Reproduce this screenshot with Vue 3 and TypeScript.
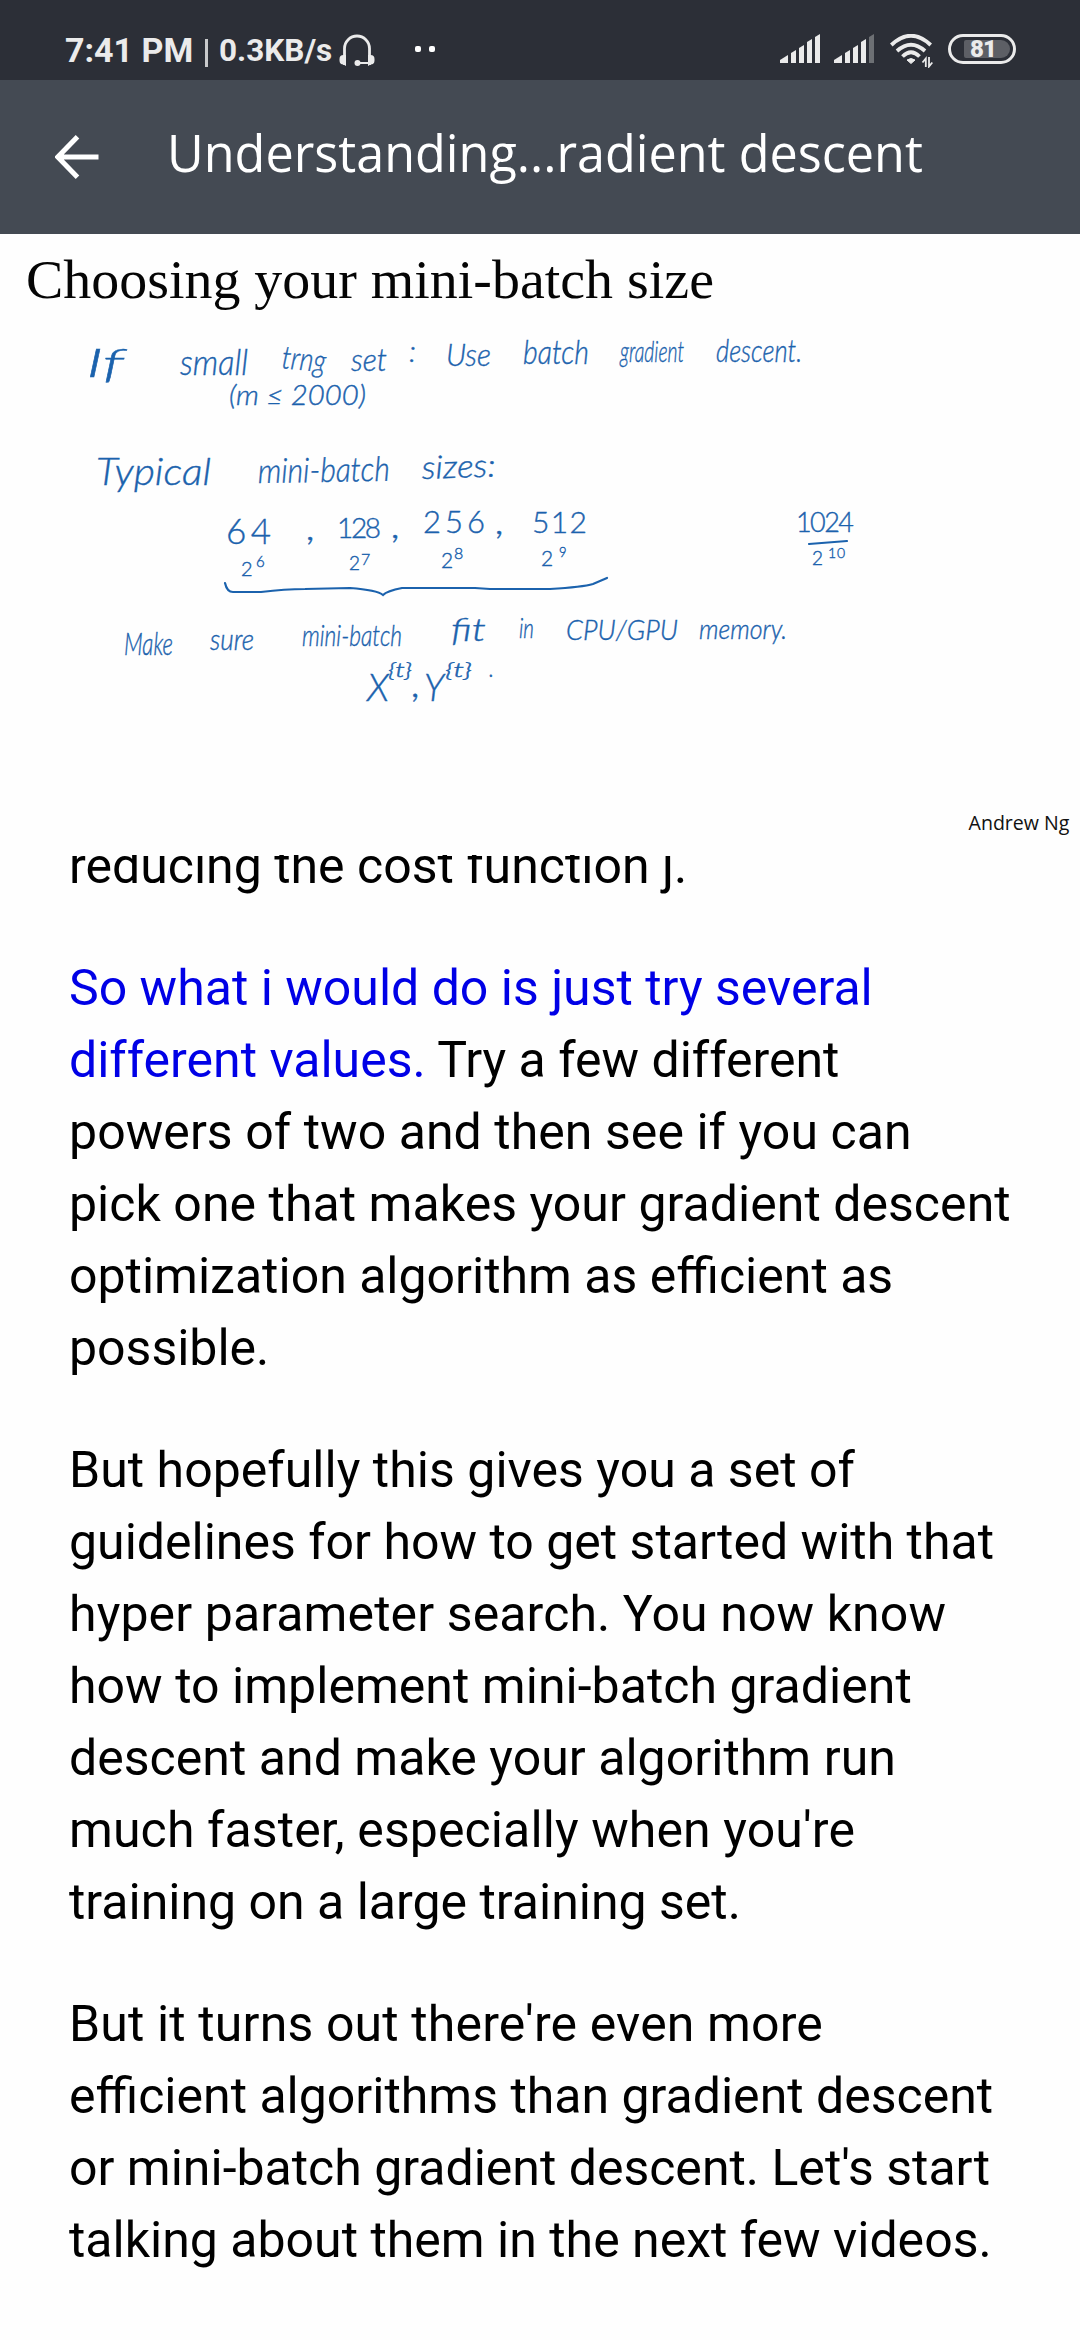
<script setup lang="ts">
interface Ink {
  t: string
  x: number
  y: number
  size: number
  w: number
  r?: number
  up?: boolean
}

// Words on the slide, placed by baseline start, size, written width and slant.
const ink: Ink[] = [
  { t: 'If', x: 86, y: 377, size: 40, w: 38 },
  { t: 'small', x: 180, y: 375, size: 36, w: 68 },
  { t: 'trng', x: 281, y: 368, size: 32, w: 44, r: 6 },
  { t: 'set', x: 351, y: 371, size: 31, w: 36 },
  { t: ':', x: 409, y: 362, size: 30, w: 7 },
  { t: 'Use', x: 446, y: 366, size: 32, w: 45 },
  { t: 'batch', x: 523, y: 364, size: 34, w: 66 },
  { t: 'gradient', x: 620, y: 362, size: 30, w: 64 },
  { t: 'descent.', x: 716, y: 362, size: 32, w: 86 },
  { t: '(m ≤ 2000)', x: 229, y: 405, size: 28, w: 137 },
  { t: 'Typical', x: 96, y: 485, size: 37, w: 115 },
  { t: 'mini-batch', x: 258, y: 483, size: 34, w: 132, r: -1 },
  { t: 'sizes:', x: 422, y: 479, size: 32, w: 74, r: -2 },
  { t: '64', x: 226, y: 544, size: 35, w: 45, up: true },
  { t: ',', x: 307, y: 540, size: 36, w: 9 },
  { t: '128', x: 337, y: 538, size: 28, w: 44, up: true },
  { t: ',', x: 392, y: 538, size: 36, w: 9 },
  { t: '256', x: 423, y: 533, size: 31, w: 62, up: true },
  { t: ',', x: 496, y: 534, size: 36, w: 9 },
  { t: '512', x: 532, y: 533, size: 30, w: 55, up: true },
  { t: '2', x: 241, y: 576, size: 20, w: 12, up: true },
  { t: '6', x: 256, y: 567, size: 15, w: 8, up: true },
  { t: '2', x: 349, y: 570, size: 19, w: 11, up: true },
  { t: '7', x: 361, y: 565, size: 16, w: 11, up: true },
  { t: '2', x: 441, y: 568, size: 21, w: 11, up: true },
  { t: '8', x: 454, y: 559, size: 16, w: 9, up: true },
  { t: '2', x: 541, y: 566, size: 21, w: 13, up: true },
  { t: '9', x: 559, y: 557, size: 13, w: 9, up: true },
  { t: '1024', x: 796, y: 532, size: 27, w: 58, up: true },
  { t: '2', x: 812, y: 565, size: 19, w: 14, up: true },
  { t: '10', x: 828, y: 558, size: 14, w: 17, up: true },
  { t: 'Make', x: 124, y: 655, size: 31, w: 49 },
  { t: 'sure', x: 210, y: 650, size: 29, w: 44 },
  { t: 'mini-batch', x: 302, y: 646, size: 29, w: 100 },
  { t: 'fit', x: 451, y: 641, size: 32, w: 35 },
  { t: 'in', x: 519, y: 638, size: 27, w: 15 },
  { t: 'CPU/GPU', x: 566, y: 640, size: 28, w: 112 },
  { t: 'memory.', x: 699, y: 639, size: 28, w: 88 },
  { t: 'X', x: 367, y: 701, size: 38, w: 22 },
  { t: '{t}', x: 388, y: 677, size: 19, w: 24 },
  { t: ',', x: 412, y: 697, size: 38, w: 9 },
  { t: 'Y', x: 424, y: 701, size: 38, w: 20 },
  { t: '{t}', x: 445, y: 677, size: 19, w: 27 },
  { t: '.', x: 489, y: 677, size: 26, w: 5 },
]

const bars = [8, 13, 18, 24, 29]

interface Line {
  t: string
  mark?: string
  gap?: number
}

const paragraphs: Line[][] = [
  [{ t: 'reducing the cost function j.' }],
  [
    { mark: 'So what i would do is just try several', t: '' },
    { mark: 'different values.', t: ' Try a few different' },
    { t: 'powers of two and then see if you can', gap: 0.05 },
    { t: 'pick one that makes your gradient descent', gap: 0.04 },
    { t: 'optimization algorithm as efficient as' },
    { t: 'possible.' },
  ],
  [
    { t: 'But hopefully this gives you a set of', gap: 0.03 },
    { t: 'guidelines for how to get started with that' },
    { t: 'hyper parameter search. You now know', gap: 0.1 },
    { t: 'how to implement mini-batch gradient', gap: 0.03 },
    { t: 'descent and make your algorithm run', gap: 0.03 },
    { t: "much faster, especially when you're", gap: 0.1 },
    { t: 'training on a large training set.' },
  ],
  [
    { t: "But it turns out there're even more", gap: 0.14 },
    { t: 'efficient algorithms than gradient descent' },
    { t: "or mini-batch gradient descent. Let's start" },
    { t: 'talking about them in the next few videos.' },
  ],
]
</script>

<template>
  <div class="screen">
    <div class="status">
      <span class="clock">7:41 PM</span>
      <span class="sep"></span>
      <span class="rate">0.3KB/s</span>
      <svg class="headset" width="36" height="33" viewBox="0 0 36 33">
        <path d="M5.500 31V14.500a12.500 12.500 0 0 1 25 0V31" fill="none" stroke="#ebebeb" stroke-width="2.800" />
        <path d="M7 21H4.500Q.5 21 .5 25v1.500Q.5 30.500 4.500 30.500L7 32zM29 21h2.500q4 0 4 4v1.500q0 4-4 4L29 32z" fill="#ebebeb" />
        <path d="M18 29h13" stroke="#ebebeb" stroke-width="2" />
        <circle cx="18.500" cy="29" r="3" fill="#ebebeb" />
      </svg>
      <span class="dots"><i></i><i></i></span>
      <span class="grow"></span>
      <svg v-for="n in 2" :key="n" class="signal" width="40" height="29" viewBox="0 0 40 29">
        <path
          v-for="(h, i) in bars"
          :key="i"
          :d="i === 0 ? 'M0 29V26L8 21V29z' : `M${i * 8 + 3} 29V${32 - h}L${i * 8 + 8} ${29 - h}V29z`"
          :fill="n === 2 && i === 4 ? '#6d7074' : '#ebebeb'"
        />
      </svg>
      <svg class="wifi" width="44" height="34" viewBox="0 0 44 34">
        <g fill="none" stroke="#ebebeb" stroke-width="3.800">
          <path d="M1.300 11Q21-7.500 40.700 11" />
          <path d="M7 17Q21 4.500 35 17" />
          <path d="M12.500 22.500Q21 14 29.500 22.500" />
        </g>
        <path d="M21 29.500L17 26q4-3 8 0z" fill="#ebebeb" stroke="#ebebeb" stroke-width="1" />
        <path d="M35.800 33V24.500L32.500 28.500M39 23v9.500L42.300 28.500" fill="none" stroke="#ebebeb" stroke-width="1.800" />
      </svg>
      <span class="battery"><b>81</b></span>
    </div>

    <header class="bar">
      <svg class="back" width="44" height="44" viewBox="0 0 44 44">
        <path d="M22.500 1.800L2.800 22L22.500 42.200M3.500 22H43.500" fill="none" stroke="#fff" stroke-width="5" />
      </svg>
      <h1>Understanding...radient descent</h1>
    </header>

    <section class="slide">
      <svg width="1080" height="621" viewBox="0 234 1080 621">
        <text class="heading" x="26" y="298" textLength="688" lengthAdjust="spacingAndGlyphs">Choosing your mini-batch size</text>
        <g class="ink">
          <text
            v-for="(k, i) in ink"
            :key="i"
            :class="{ up: k.up }"
            :x="k.x"
            :y="k.y"
            :font-size="k.size"
            :textLength="k.w"
            :lengthAdjust="k.up ? 'spacing' : 'spacingAndGlyphs'"
            :transform="`rotate(${k.r ?? 0} ${k.x} ${k.y})`"
          >{{ k.t }}</text>
        </g>
        <g class="strokes">
          <path d="M225 583Q227 592 233 592H261Q285 589 305 589L350 588Q377 590 383 595Q387 591 402 588L475 588L490 589H550Q583 587 593 584L607 578" />
          <path d="M809 544L847 541" />
        </g>
        <text class="author" x="968.500" y="830" textLength="101" lengthAdjust="spacingAndGlyphs">Andrew Ng</text>
      </svg>
    </section>

    <main class="reader">
      <p v-for="(p, i) in paragraphs" :key="i">
        <span
          v-for="(line, j) in p"
          :key="j"
          class="line"
          :style="{ letterSpacing: `${line.gap ?? 0}px` }"
        ><em v-if="line.mark">{{ line.mark }}</em>{{ line.t }}</span>
      </p>
    </main>
  </div>
</template>

<style>
body {
  margin: 0;
  background: #fefefe;
}
</style>

<style scoped>
.screen {
  width: 1080px;
  height: 2340px;
  display: flex;
  flex-direction: column;
  overflow: hidden;
  background: #fefefe;
  font-family: Roboto, sans-serif;
}
.status {
  display: flex;
  align-items: flex-start;
  box-sizing: border-box;
  height: 80px;
  padding: 34px 64px 0 65px;
  background: #2c2f37;
  color: #ebebeb;
  font-weight: 700;
  white-space: nowrap;
}
.status > * {
  flex: none;
}
.clock {
  width: 129px;
  font-size: 34px;
  line-height: 32px;
}
.sep {
  width: 3px;
  height: 28px;
  margin: 5px 11px 0;
  background: #c9cacc;
}
.rate {
  width: 112px;
  font-size: 31.500px;
  line-height: 34px;
}
.headset {
  margin-left: 8px;
}
.dots {
  display: flex;
  gap: 8px;
  margin: 12px 0 0 40px;
}
.dots i {
  width: 6px;
  height: 6px;
  border-radius: 2px;
  background: #fff;
}
.status .grow {
  flex: 1;
}
.signal {
  margin-right: 14px;
}
.wifi {
  margin: 0 14px 0 2px;
}
.battery {
  box-sizing: border-box;
  width: 68px;
  height: 30px;
  border: 3px solid #ebebeb;
  border-radius: 15px;
  padding: 3px 3px 3px 13px;
  display: flex;
}
.battery b {
  flex: 1;
  padding-left: 6px;
  border-radius: 2px 9px 9px 2px;
  background: #5d5f65;
  font-size: 24px;
  line-height: 19px;
  letter-spacing: -1px;
}
.bar {
  display: flex;
  align-items: flex-start;
  box-sizing: border-box;
  height: 154px;
  padding: 55px 0 0 55px;
  background: #444a53;
}
.bar h1 {
  margin: -17px 0 0 68px;
  color: #fff;
  font: 400 50.350px/70px "Open Sans", sans-serif;
  white-space: nowrap;
}
.slide {
  height: 621px;
  flex: none;
}
.slide svg {
  display: block;
}
.heading {
  font: 54px "Liberation Serif", serif;
  fill: #050505;
}
.ink {
  font-family: Lato, sans-serif;
  font-weight: 300;
  font-style: italic;
  fill: #1b62ad;
  stroke: #1b62ad;
  stroke-width: 0.4;
}
.ink .up {
  font-style: normal;
}
.strokes {
  fill: none;
  stroke: #1b62ad;
  stroke-width: 2.200;
  stroke-linecap: round;
}
.author {
  font: 20px "Open Sans", sans-serif;
  fill: #111;
}
.reader {
  flex: 1;
  overflow: hidden;
  padding-left: 69px;
  color: #000;
  font-size: 50px;
  line-height: 72px;
}
.reader p {
  margin: 0 0 50px;
}
.reader p:first-child {
  margin-top: -25px;
}
.line {
  display: block;
  white-space: pre;
}
.reader em {
  font-style: normal;
  color: #0000e6;
}
</style>
